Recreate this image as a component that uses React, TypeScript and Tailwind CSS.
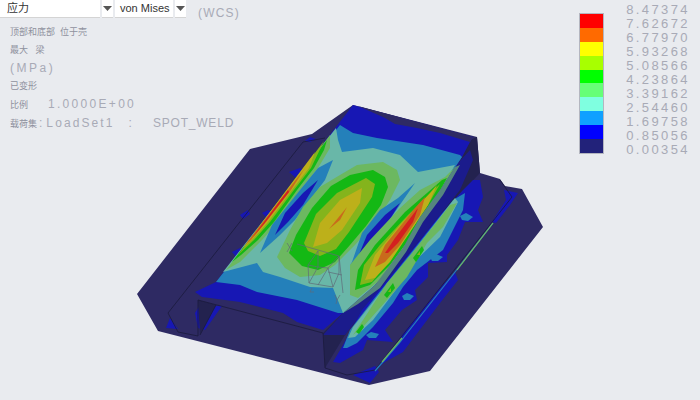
const NAVY = "#2e2a63";
const WALL = "#23224f";
const STRIP = "#1b1b8c";
const BLUE = "#1717b4";
const MID = "#2480ba";
const TEAL = "#69b7a8";
const LGREEN = "#6cb860";
const GREEN = "#14b814";
const LIME = "#84b41c";
const YELLOW = "#bdb01a";
const ORANGE = "#c96a1c";
const RED = "#d42020";

const legendColors = [
  "bg-[#ff0000]", "bg-[#ff6a00]", "bg-[#ffff00]", "bg-[#a8ff00]", "bg-[#00ff00]",
  "bg-[#66ff77]", "bg-[#7fffe0]", "bg-[#10a0ff]", "bg-[#0000ff]", "bg-[#22227a]",
];
const legendValues = [
  "8.47374", "7.62672", "6.77970", "5.93268", "5.08566", "4.23864",
  "3.39162", "2.54460", "1.69758", "0.85056", "0.00354",
];

// contour bands of the model, painted back to front
const shapes: [string, string][] = [
  // plate
  [NAVY, "250,149 312,134 353,105 477,137 480,173 500,179 505,186 522,189 543,227 430,371 369,385 158,331 137,294"],
  // blue spots on the plate
  [BLUE, "305,141 310,137 316,139 310,142"],
  [BLUE, "289,172 300,168 305,171 296,178"],
  [BLUE, "240,215 248,210 250,214 243,219"],
  [BLUE, "262,213 268,210 274,213 268,219"],
  [BLUE, "232,252 240,248 243,252 237,258"],
  [BLUE, "170,318 178,329 166,328"],
  [BLUE, "195,313 200,305 222,306 205,330 198,328"],
  // steep wall on the far side
  [WALL, "470,140 477,137 480,173 450,205 400,265 345,335 325,368 323,333 343,313 462,157"],
  [STRIP, "458,163 470,150 473,160 460,190 420,240 380,290 345,335 323,335 343,313"],
  // left opening
  [WALL, "198,300 200,335 216,305"],
  // raised face
  [BLUE, "353,105 473,137 470,142 462,157 440,190 420,217 403,248 375,285 343,313 323,330 297,322 283,313 240,302 210,298 202,297 195,292 216,282"],
  [NAVY, "358,106 473,137 470,142 440,133 417,128 395,124 385,118"],
  [MID, "340,125 353,133 377,138 423,145 460,155 462,157 440,190 420,217 403,248 375,285 343,313 338,313 297,300 257,292 240,285 216,282"],
  [TEAL, "336,128 338,140 342,152 373,148 400,155 418,172 455,165 440,190 420,217 403,248 375,285 343,313 333,288 310,287 280,277 263,272 257,263 223,272"],
  // left ridge
  [LGREEN, "226,270 330,135 330,148 318,168 300,190 278,222 262,240 240,262"],
  [GREEN, "232,262 327,140 324,150 314,168 297,190 274,222 258,240 241,255"],
  [LIME, "238,255 324,141 311,168 294,190 270,222 254,240"],
  [YELLOW, "243,248 315,152 309,168 292,190 268,222 252,240"],
  [ORANGE, "245,245 305,168 291,190 266,222 251,240"],
  [RED, "252,238 288,190 289,192 264,224"],
  // valley 1
  [MID, "333,160 325,180 310,200 295,220 280,235 260,253 272,225 300,190 318,168"],
  [BLUE, "318,180 303,205 288,222 275,235 285,213 303,193"],
  // centre hot spot
  [LGREEN, "277,257 290,230 303,207 320,187 340,175 357,165 383,162 397,170 400,180 390,200 375,222 355,245 335,265 320,275 300,277 285,268"],
  [GREEN, "289,253 296,235 312,208 331,186 350,175 373,170 385,177 388,187 381,205 366,226 350,245 335,262 318,270 302,266"],
  [LIME, "304,243 316,214 337,193 366,178 375,184 372,197 349,232 336,249 320,256 308,251"],
  [YELLOW, "313,247 320,223 340,200 362,188 360,203 342,230 327,243"],
  [ORANGE, "329,229 347,207 340,220"],
  // valley 2
  [MID, "415,183 395,212 380,235 365,253 350,265 352,262 362,233 380,210 398,198"],
  [BLUE, "400,203 385,227 370,245 358,257 367,235 385,215"],
  // ridge 2
  [LGREEN, "350,295 350,265 370,240 400,208 420,190 445,177 455,167 440,190 420,217 403,248 380,280 358,298"],
  [GREEN, "355,290 358,270 375,245 405,212 442,180 447,178 432,205 410,238 390,265 370,285"],
  [LIME, "360,285 364,265 380,245 408,215 440,184 428,205 408,235 388,262 372,282"],
  [YELLOW, "365,280 375,255 400,225 430,193 437,185 428,205 408,235 390,262 375,278"],
  [ORANGE, "375,267 385,245 415,208 425,197 420,215 400,245 385,262"],
  [RED, "385,253 395,238 418,208 413,222 398,243 388,253"],
  // grey fade on the bend
  ["#55857f", "455,167 460,165 443,195 423,222 406,252 380,288 358,304 343,313 375,285 403,248 420,217 440,190"],
  // flange strip
  [BLUE, "333,362 343,345 362,310 400,265 440,215 463,190 473,180 480,180 483,197 478,210 483,222 465,222 458,240 447,255 447,262 428,263 428,277 415,290 417,300 402,310 385,330 393,342 367,340 363,350 340,363"],
  [MID, "343,348 350,330 373,300 410,254 453,200 465,193 463,210 453,230 443,250 417,270 403,287 393,303 373,327 357,343 347,348"],
  [MID, "366,335 371,332 379,334 376,338 369,338"],
  [MID, "402,296 407,293 414,296 410,300 404,300"],
  [MID, "430,257 436,254 443,257 438,261 432,261"],
  [MID, "460,216 466,213 473,217 468,221 462,220"],
  [TEAL, "348,338 353,327 380,293 417,247 455,198 458,202 440,237 413,263 398,287 373,320 355,337"],
  [LGREEN, "353,335 363,320 387,283 413,252 450,205 457,203 443,227 427,243 407,277 387,300 363,327"],
  [GREEN, "413,258 422,246 424,250 416,262"],
  [GREEN, "384,295 393,283 395,288 387,298"],
  [GREEN, "356,332 362,324 364,327 359,334"],
  [LIME, "417,255 420,251 420,255"],
  [LIME, "388,292 391,288 391,292"],
  // blue slivers along the plate edge
  [BLUE, "353,375 375,366 379,372 370,383"],
  [BLUE, "377,368 398,345 402,335 440,288 455,272 458,280 440,303 403,352 385,362"],
  [BLUE, "492,222 506,200 504,190 518,193 510,205 496,223"],
];

const Arrow = () => (
  <svg width="9" height="5" viewBox="0 0 9 5">
    <path d="M0 0h9L4.500 5z" fill="#555" />
  </svg>
);

const Select = ({ label, width, pad }: { label: string; width: string; pad: string }) => (
  <div className="flex gap-[2px]">
    <div className={`h-[18px] ${width} ${pad} bg-white flex items-center text-[11px] text-[#333] border-b border-[#d4d4d4] whitespace-nowrap`}>{label}</div>
    <div className="h-[18px] w-[11px] bg-white flex items-center justify-center border-b border-[#d4d4d4]">
      <Arrow />
    </div>
  </div>
);

export default function App() {
  return (
    <div className="relative w-[700px] h-[400px] overflow-hidden bg-[#e9ebef] font-['Liberation_Sans','Noto_Sans_CJK_SC',sans-serif]">
      {/* FEA model */}
      <svg className="absolute inset-0 blur-[0.7px]" width="700" height="400" viewBox="0 0 700 400">
        {shapes.map(([fill, points], i) => (
          <polygon key={i} fill={fill} points={points} />
        ))}
        {/* thin edge lines */}
        <g fill="none" stroke="#1a1a3c" strokeWidth="0.8">
          <polyline points="325,138 303,142 168,313 178,332 198,336 198,300 323,333 325,368 347,375 375,370 512,197 500,180" />
          <polyline points="200,335 216,305" />
        </g>
        {/* hot line on the plate edge */}
        <polyline fill="none" stroke={MID} strokeWidth="1.2" points="375,371 400,342 455,272 493,223" />
        <polyline fill="none" stroke={LGREEN} strokeWidth="1.2" points="382,362 402,338" />
        <polyline fill="none" stroke={LGREEN} strokeWidth="1.2" points="457,270 493,223" />
        {/* csys triad */}
        <g fill="none" stroke="#5f6a78" strokeWidth="0.7">
          <polyline points="297,244 339,256 343,293" />
          <polyline points="318,251 308,265 309,283 333,287 339,273 339,256" />
          <polyline points="318,251 318,267 308,265" />
          <polyline points="318,267 328,268 339,256" />
          <polyline points="318,267 309,283" />
          <polyline points="328,268 318,285" />
          <polyline points="328,268 333,287" />
          <polyline points="328,272 342,275" />
          <polyline points="287,243 292,251" />
          <polyline points="292,243 287,252" />
          <polyline points="312,288 310,292 314,292" />
          <polyline points="335,295 337,300 340,295" />
          <polyline points="337,300 336,304" />
        </g>
      </svg>

      <div className="relative flex justify-between h-full">
        {/* top bar and result labels */}
        <div className="flex flex-col">
          <div className="flex items-start gap-[2px]">
            <Select label="应力" width="w-[100px]" pad="pl-[7px]" />
            <Select label="von Mises" width="w-[58px]" pad="pl-[5px]" />
            <span className="ml-[10px] mt-[5px] text-[12px] leading-[16px] tracking-[1.2px] text-[#a8aab6]">(WCS)</span>
          </div>
          <div className="flex flex-col mt-[2px] pl-[10px] text-[#8f919e] text-[9px] leading-[18px] whitespace-pre">
            <span>顶部和底部  位于壳</span>
            <span>最大   梁</span>
            <span className="text-[12px] tracking-[2.5px] text-[#a8aab6]">(MPa)</span>
            <span>已变形</span>
            <span>比例<span className="ml-[20px] text-[12px] tracking-[2.3px] text-[#a8aab6]">1.0000E+00</span></span>
            <span>
              载荷集
              <span className="ml-[2px] text-[12px] text-[#a8aab6]">:</span>
              <span className="ml-[4px] text-[12px] tracking-[2.1px] text-[#a8aab6]">LoadSet1</span>
              <span className="ml-[14px] text-[12px] text-[#a8aab6]">:</span>
              <span className="ml-[21px] text-[12px] tracking-[0.8px] text-[#a8aab6]">SPOT_WELD</span>
            </span>
          </div>
        </div>

        {/* colour legend */}
        <div className="flex gap-[22px] pr-[10px] pt-[3px]">
          <div className="flex flex-col mt-[10px] h-fit border border-[#b4b6c0]">
            {legendColors.map((c) => (
              <div key={c} className={`w-[23px] h-[13.9px] ${c}`} />
            ))}
          </div>
          <div className="flex flex-col text-[13px] leading-[14px] tracking-[2.4px] text-[#a8aab6]">
            {legendValues.map((v) => (
              <span key={v}>{v}</span>
            ))}
          </div>
        </div>
      </div>
    </div>
  );
}
